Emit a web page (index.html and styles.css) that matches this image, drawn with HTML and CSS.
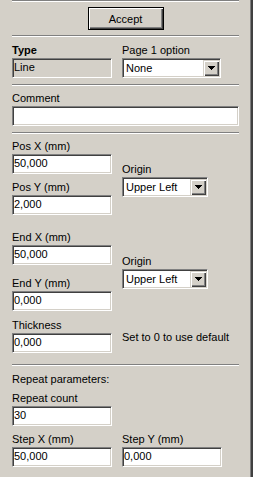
FILE: index.html
```html
<!DOCTYPE html>
<html>
<head>
<title>Line properties</title>
<link rel="stylesheet" href="styles.css">
</head>
<body>
<div class="frame">
  <div class="panel">
    <div class="sep sep-first"></div>

    <div class="actions">
      <button class="btn btn-default">Accept</button>
    </div>

    <div class="sep sep-after-btn"></div>

    <div class="row row-type">
      <div class="col">
        <div class="label bold">Type</div>
        <div class="edit readonly">Line</div>
      </div>
      <div class="col col-right">
        <div class="label">Page 1 option</div>
        <div class="combo combo-page">
          <span class="combo-value">None</span>
          <span class="combo-btn"><svg width="7" height="4" viewBox="0 0 7 4"><polygon points="0,0 7,0 3.5,4" fill="#000"/></svg></span>
        </div>
      </div>
    </div>

    <div class="sep sep-mid"></div>

    <div class="field field-comment">
      <div class="label">Comment</div>
      <div class="edit wide"></div>
    </div>

    <div class="sep sep-mid"></div>

    <div class="row row-pos">
      <div class="col">
        <div class="label">Pos X (mm)</div>
        <div class="edit">50,000</div>
        <div class="label next">Pos Y (mm)</div>
        <div class="edit">2,000</div>
      </div>
      <div class="col col-right col-origin">
        <div class="label">Origin</div>
        <div class="combo combo-origin">
          <span class="combo-value">Upper Left</span>
          <span class="combo-btn"><svg width="7" height="4" viewBox="0 0 7 4"><polygon points="0,0 7,0 3.5,4" fill="#000"/></svg></span>
        </div>
      </div>
    </div>

    <div class="row row-end">
      <div class="col">
        <div class="label">End X (mm)</div>
        <div class="edit">50,000</div>
        <div class="label next-wide">End Y (mm)</div>
        <div class="edit">0,000</div>
      </div>
      <div class="col col-right col-origin2">
        <div class="label">Origin</div>
        <div class="combo combo-origin">
          <span class="combo-value">Upper Left</span>
          <span class="combo-btn"><svg width="7" height="4" viewBox="0 0 7 4"><polygon points="0,0 7,0 3.5,4" fill="#000"/></svg></span>
        </div>
      </div>
    </div>

    <div class="row row-thick">
      <div class="col">
        <div class="label">Thickness</div>
        <div class="edit">0,000</div>
      </div>
      <div class="col col-right">
        <div class="hint">Set to 0 to use default</div>
      </div>
    </div>

    <div class="sep sep-repeat"></div>

    <div class="label section">Repeat parameters:</div>

    <div class="field field-count">
      <div class="label">Repeat count</div>
      <div class="edit">30</div>
    </div>

    <div class="row row-step">
      <div class="col">
        <div class="label">Step X (mm)</div>
        <div class="edit">50,000</div>
      </div>
      <div class="col col-right">
        <div class="label">Step Y (mm)</div>
        <div class="edit">0,000</div>
      </div>
    </div>
  </div>
</div>
</body>
</html>
```

FILE: styles.css
```css
body, html {
  margin: 0;
  padding: 0;
  background: #d4d0c8;
}

body {
  font-family: "Liberation Sans", Arial, sans-serif;
  font-size: 11px;
  color: #000;
}

.frame {
  width: 251px;
  height: 477px;
  border-right: 2px solid #404040;
}

.panel {
  box-sizing: border-box;
  width: 251px;
  height: 477px;
  padding: 0 11px 0 12px;
  border-right: 1px solid #808080;
}

/* etched separator */
.sep {
  height: 0;
  border-top: 1px solid #808080;
  border-bottom: 1px solid #fff;
}
.sep-after-btn { margin-top: 5px; }
.sep-mid { margin-top: 6px; }
.sep-repeat { margin-top: 11px; }

.actions {
  display: flex;
  justify-content: center;
  margin-top: 5px;
}

.btn {
  box-sizing: border-box;
  width: 76px;
  height: 23px;
  margin: 0;
  padding: 0;
  background: #d4d0c8;
  font-family: inherit;
  font-size: 11px;
  color: #000;
  border: 1px solid #000;
  box-shadow: inset 1px 1px #fff, inset -1px -1px #404040, inset -2px -2px #808080;
}

.row {
  display: flex;
}

.col {
  width: 100px;
}

.col-right {
  margin-left: 10px;
}

.label {
  height: 15px;
  line-height: 15px;
  white-space: nowrap;
}

.bold {
  font-weight: bold;
}

.label.next { margin-top: 6px; }
.label.next-wide { margin-top: 11px; }

.edit {
  box-sizing: border-box;
  width: 100px;
  height: 20px;
  padding-left: 1px;
  line-height: 16px;
  background: #fff;
  border: 1px solid;
  border-color: #808080 #fff #fff #808080;
  box-shadow: inset 1px 1px #404040, inset -1px -1px #d4d0c8;
  white-space: nowrap;
}

.edit.readonly {
  background: #d4d0c8;
}

.edit.wide {
  width: 227px;
}

.combo {
  box-sizing: border-box;
  display: flex;
  height: 20px;
  background: #fff;
  border: 1px solid;
  border-color: #808080 #fff #fff #808080;
  box-shadow: inset 1px 1px #404040, inset -1px -1px #d4d0c8;
  padding: 1px;
}

.combo-page { width: 99px; }
.combo-origin { width: 86px; }

.combo-value {
  flex: 1;
  padding-left: 2px;
  line-height: 16px;
  white-space: nowrap;
  overflow: hidden;
}

.combo-btn {
  display: flex;
  align-items: center;
  justify-content: center;
  width: 16px;
  height: 16px;
  background: #d4d0c8;
  box-shadow: inset 1px 1px #d4d0c8, inset 2px 2px #fff, inset -1px -1px #404040, inset -2px -2px #808080;
}

.combo-btn svg {
  display: block;
  margin-left: 1px;
  shape-rendering: crispEdges;
}

.row-type { margin-top: 6px; }
.field-comment { margin-top: 5px; }
.row-pos { margin-top: 5px; }
.col-origin { margin-top: 23px; }
.row-end { margin-top: 15px; }
.col-origin2 { margin-top: 24px; }
.row-thick { margin-top: 7px; }

.hint {
  margin-top: 12px;
  line-height: 15px;
  white-space: nowrap;
}

.section { margin-top: 6px; }
.field-count { margin-top: 4px; }
.row-step { margin-top: 6px; }
```
